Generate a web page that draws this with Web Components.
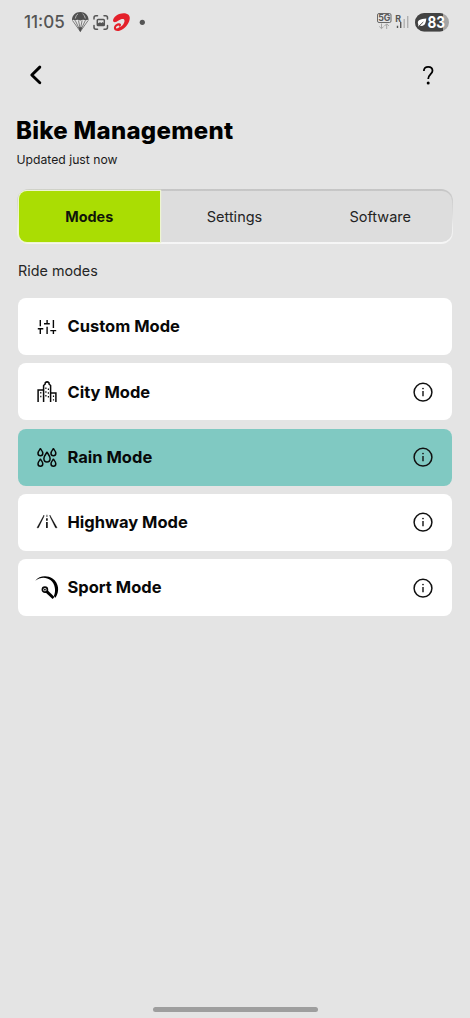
<!DOCTYPE html>
<html lang="en">
<head>
<meta charset="utf-8">
<title>Bike Management</title>
<style>
html,body{margin:0;height:100%}
body{background:#e4e4e4;font-family:Inter,"Liberation Sans",sans-serif;color:#000;overflow:hidden}
</style>
</head>
<body>
<bike-screen></bike-screen>
<script>
const define = (name, html) => customElements.define(name, class extends HTMLElement {
  connectedCallback() {
    if (this.shadowRoot) return;
    const t = document.createElement('template');
    t.innerHTML = html;
    this.attachShadow({ mode: 'open' }).append(t.content.cloneNode(true));
  }
});

define('status-bar', `<style>
:host{display:flex;height:45px;box-sizing:border-box;padding:0 21px 0 24px;justify-content:space-between;align-items:center;color:#555}
.l,.r{display:flex;align-items:center;height:45px}
.time{font-size:17px;font-weight:500;line-height:45px;width:47px;white-space:nowrap}
svg{display:block;overflow:visible}
</style>
<div class="l"><span class="time">11:05</span>
<svg width="76" height="45" viewBox="71 0 76 45">
<path d="M72 20.5C72 15 75.6 12 80.300 12s8.300 3 8.300 8.500q-1.400-1.300-2.800 0q-2.600-1.500-5.500 0q-2.900-1.500-5.500 0q-1.200-1.300-2.800 0z" fill="#505050"/>
<path d="M75.300 18.500q.5-3.500 2.700-4.600M85.300 18.500q-.5-3.500-2.700-4.600" fill="none" stroke="#ccc" stroke-width=".8"/>
<path d="M72.500 20.500L80.300 31.500L88.100 20.500M75.300 20.500L80.300 31L85.300 20.500M78.500 20.500l1.800 9l1.800-9" fill="none" stroke="#707070" stroke-width=".9"/>
<path d="M78.300 27.300h4l-2 5z" fill="#505050"/>
<g fill="none" stroke="#555" stroke-width="1.500" stroke-linecap="round"><path d="M94 19v-1.200q0-2 2-2h1.500M104 15.800h1.500q2 0 2 2V19M107.500 25.500v1.700q0 2-2 2H104M97.500 29.200H96q-2 0-2-2v-1.700"/><rect x="97.300" y="19.500" width="7" height="6" rx=".8"/></g><path d="M98 25.300v-2l2-1l1.500.8l1.200-1l1.600 1.500v1.700z" fill="#555"/>
<path d="M113.200 19.500C114.500 16 119 13.300 123.500 13.200C128 13.200 130.300 15.500 129.700 19C129 24 124.500 29.500 119.500 30.800C116.500 31.500 113.800 30.300 113.900 28C114 25 117.800 22.800 119.900 23.500C122 24.200 121 26.800 118.500 27.500C121.300 27.200 124.500 23.500 124.500 20.900C124.500 18.200 122 18.500 119 20.200C116.500 21.700 114.800 22.800 113.500 21.800Q112.700 21 113.200 19.500z" fill="#e4202a"/><ellipse cx="117.700" cy="27" rx="1.900" ry="1.200" transform="rotate(-28 117.700 27)" fill="#e4e4e4"/>
<circle cx="142.300" cy="22.300" r="2.600" fill="#555"/>
</svg></div>
<div class="r">
<svg width="73" height="45" viewBox="376 0 73 45" font-family="Inter,sans-serif">
<rect x="377.500" y="13.500" width="13.500" height="9" rx="1.500" fill="none" stroke="#686868" stroke-width="1"/>
<text x="384.250" y="21.300" font-size="8.800" font-weight="700" text-anchor="middle" fill="#5a5a5a">5G</text>
<path d="M381.500 23.500v5m-2.200-2l2.200 2.200l2.200-2.200M386.700 29v-5m-2.200 2l2.200-2.200l2.200 2.200" stroke="#a4a4a4" fill="none"/>
<text x="395.300" y="21.700" font-size="8.800" font-weight="700" fill="#555">R</text>
<path d="M397.500 25.700v2.300M400.700 22v6" stroke="#555" stroke-width="1.400"/><path d="M404.200 19v9M407.700 16v12" stroke="#b0b0b0" stroke-width="1.400"/>
<clipPath id="c"><rect x="415" y="13" width="34" height="18.500" rx="9.250"/></clipPath>
<g clip-path="url(#c)"><rect x="415" y="13" width="34" height="19" fill="#a4a4a4"/><rect x="415" y="13" width="28" height="19" fill="#424242"/></g>
<path d="M418.300 24.500C416.500 20 420.500 18.700 426.300 18.400C426 23 424.500 27 419.800 25.600L418.300 27z" fill="#fff"/><path d="M418.300 26.700l5-4.700" stroke="#424242" stroke-width=".9"/>
<text x="427.500" y="28.300" font-size="16.500" font-weight="700" fill="#fff" textLength="17.500" lengthAdjust="spacingAndGlyphs">83</text>
</svg></div>`);

define('nav-bar', `<style>
:host{display:flex;height:60px;padding:0 34px 0 28px;justify-content:space-between;align-items:center}
svg{display:block}
</style>
<svg width="16" height="60" viewBox="28 45 16 60"><path d="M39.800 67.100L31.800 75L39.800 82.700" fill="none" stroke="#000" stroke-width="2.900" stroke-linecap="round" stroke-linejoin="round"/></svg>
<svg width="16" height="60" viewBox="420 45 16 60"><path d="M423.900 71C423.800 68.500 425.500 66.800 428.200 66.800C430.900 66.800 432.500 68.500 432.500 70.700C432.500 74 428.300 74.500 428.200 78.900" fill="none" stroke="#000" stroke-width="1.800"/><circle cx="428.200" cy="82.900" r="1.500"/></svg>`);

define('segment-tabs', `<style>
:host{display:block;margin:0 17px;height:55px;box-sizing:border-box;border-radius:12px;padding:2px 1.500px;background:linear-gradient(180deg,#c5c5c5,#dcdcdc 45%,#efefef 70%,#f6f6f6)}
div{display:grid;grid-template-columns:141.500px 149px 1fr;height:51px;background:#ddd;border-radius:10px}
</style><div><slot></slot></div>`);

define('segment-tab', `<style>
:host{display:flex;align-items:center;justify-content:center;font-size:14.500px;color:#242424;white-space:nowrap}
:host([active]){background:#aadd03;border-radius:8px 0 0 8px;box-shadow:0 0 0 1.200px #eef5d0;font-weight:700;color:#10140a;font-size:14.400px}
</style><slot></slot>`);

define('info-button', `<style>:host{display:block}svg{display:block}</style>
<svg width="20" height="20" viewBox="0 0 20 20" fill="none" stroke="#111"><circle cx="10" cy="10.200" r="8.900" stroke-width="1.500"/><path d="M10 8.900v5.300" stroke-width="1.400"/><circle cx="10" cy="6.500" r=".85" fill="#111" stroke="none"/></svg>`);

const drop = (x, y, w, h) => `<path d="M${x} ${y}C${x - w * .4} ${y + h * .2} ${x - w} ${y + h * .4} ${x - w} ${y + h * .65}C${x - w} ${y + h * 1.120} ${x + w} ${y + h * 1.120} ${x + w} ${y + h * .65}C${x + w} ${y + h * .4} ${x + w * .4} ${y + h * .2} ${x} ${y}z" stroke-linejoin="round"/>`;
const icons = {
  custom: '<g stroke-width="1.400"><path d="M5.300 5v6.200M2.800 13.700h5.500M5.300 13.700v5.300M9 8.800h5.800M12.100 5v3.800M12.100 11.700v7.300M18.400 5v8M15.300 15.600h5.900M18.400 15.600v3.400"/></g>',
  city: '<g stroke-width="1.500"><path d="M3.100 22V10h4.800M8.600 22V5.500l1.600-1.500V2.800q1.900-1.800 3.800 0V4l1.600 1.500V22M16.100 13.100h4.800V22"/></g><path stroke-width="1.200" stroke-dasharray="1.500 2.200" d="M10.900 7.500v11M13.400 8.500v11M5.800 12v7M18.500 15.500v5"/>',
  rain: '<g stroke-width="1.500">' + drop(5.400, 3.700, 2.400, 7) + drop(18.400, 3.700, 2.400, 7) + drop(5.400, 14.200, 2.400, 7) + drop(18.400, 14.200, 2.400, 7) + drop(12, 7.200, 3.100, 9.800) + '</g>',
  highway: '<path d="M2 17.800L9 5L8.800 6.800L3.400 17.800zM14.800 5l7.300 12.800h-1.600L15.100 6.800z" fill="#080808" stroke="#080808" stroke-width=".4"/><path d="M11.900 8.300v2.500M11.900 12v6" stroke-width="1.600"/><path d="M11.200 4.800h1.400v2.200h-1.400z" fill="#777" stroke="none"/>',
  sport: '<path d="M.3 4.800C4-.2 12-1 17.500 2.500C24 7 24.800 15.500 20.500 21.800L18.900 20.100C21.200 15 20.200 8 15.700 4.300C11.300 .8 5 .9 .3 4.800z" fill="#000" stroke="none"/><circle cx="9.900" cy="13.700" r="2.500" stroke-width="1.700"/><circle cx="9.900" cy="13.700" r=".9" fill="#000" stroke="none"/><path d="M12.600 14.300l6.900 6.600l-1.900 2.100l-7-6.400z" fill="#000" stroke="none"/>'
};

customElements.define('mode-card', class extends HTMLElement {
  connectedCallback() {
    if (this.shadowRoot) return;
    this.attachShadow({ mode: 'open' }).innerHTML = `<style>
:host{display:flex;align-items:center;height:57px;box-sizing:border-box;border-radius:8px;background:#fff;padding:0 18.800px 0 17px}
:host([active]){background:#80c9c2}
svg{display:block;flex:none;overflow:visible}
.name{flex:1;padding:0 0 .2px 8.500px;font-size:16.500px;font-weight:700;color:#080808;white-space:nowrap}
</style><svg width="24" height="24" viewBox="0 0 24 24" fill="none" stroke="#080808">${icons[this.getAttribute('icon')]}</svg>
<span class="name"><slot></slot></span>${this.hasAttribute('info') ? '<info-button></info-button>' : ''}`;
  }
});

define('bike-screen', `<style>
:host{display:flex;flex-direction:column;height:1018px;width:470px}
h1{margin:11px 0 0 16px;font-size:24px;line-height:30px;font-weight:800;letter-spacing:.29px;white-space:nowrap}
.sub{margin:6px 0 0 16.500px;font-size:12.200px;line-height:16px;color:#1a1a1a}
segment-tabs{margin-top:21px}
h2{margin:17px 0 0 18px;font-size:14.350px;line-height:20px;font-weight:400;color:#262626}
.list{display:flex;flex-direction:column;gap:8.250px;margin:17px 18px 0}
.home{width:165px;height:5px;border-radius:3px;background:#9e9e9e;margin:auto 153px 6.500px 152.500px}
</style>
<status-bar></status-bar><nav-bar></nav-bar>
<h1>Bike Management</h1><div class="sub">Updated just now</div>
<segment-tabs><segment-tab active>Modes</segment-tab><segment-tab>Settings</segment-tab><segment-tab>Software</segment-tab></segment-tabs>
<h2>Ride modes</h2>
<div class="list">
<mode-card icon="custom">Custom Mode</mode-card>
<mode-card icon="city" info>City Mode</mode-card>
<mode-card icon="rain" info active>Rain Mode</mode-card>
<mode-card icon="highway" info>Highway Mode</mode-card>
<mode-card icon="sport" info>Sport Mode</mode-card>
</div><div class="home"></div>`);
</script>
</body>
</html>
